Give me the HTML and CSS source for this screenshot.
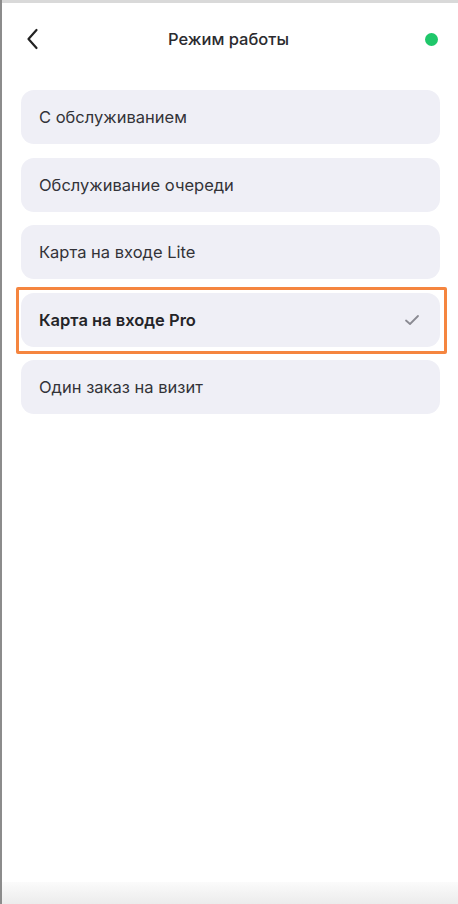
FILE: index.html
```html
<!DOCTYPE html>
<html lang="ru">
<head>
<meta charset="utf-8">
<link rel="stylesheet" href="styles.css">
</head>
<body>
<div class="screen">
  <div class="topbar"></div>
  <header class="header">
    <button class="back" aria-label="Назад">
      <svg width="14" height="22" viewBox="0 0 14 22"><path d="M11.5 2 L3.5 11 L11.5 20" fill="none" stroke="#222" stroke-width="2.2" stroke-linecap="round" stroke-linejoin="round"/></svg>
    </button>
    <h1 class="title">Режим работы</h1>
    <span class="status"></span>
  </header>
  <ul class="list">
    <li class="item">С обслуживанием</li>
    <li class="item">Обслуживание очереди</li>
    <li class="item">Карта на входе Lite</li>
    <li class="item selected">
      <span>Карта на входе Pro</span>
      <svg class="check" width="16" height="12" viewBox="0 0 16 12"><path d="M2 6.5 L6 10 L14 2" fill="none" stroke="#8a8a92" stroke-width="1.8" stroke-linecap="round" stroke-linejoin="round"/></svg>
      <span class="highlight"></span>
    </li>
    <li class="item">Один заказ на визит</li>
  </ul>
  <div class="bottom"></div>
</div>
</body>
</html>
```
FILE: styles.css
```css
* { box-sizing: border-box; }
html, body { margin: 0; padding: 0; background: #fff; }
body { font-family: Inter, Roboto, "Noto Sans", sans-serif; color: #2b2b2f; }
.screen {
  width: 458px;
  height: 904px;
  position: relative;
  display: flex;
  flex-direction: column;
  border-left: 2px solid #8c8c8c;
  overflow: hidden;
}
.topbar { height: 3px; background: #d9d9d9; flex: none; }
.header {
  height: 72px;
  display: grid;
  grid-template-columns: 1fr auto 1fr;
  align-items: center;
  padding: 0 20px 0 23px;
}
.back { background: none; border: 0; padding: 0; width: 20px; height: 24px; display: flex; align-items: center; justify-self: start; }
.title { margin: 0 6px 0 0; font-size: 16.5px; font-weight: 500; color: #2b2b2f; }
.status { width: 13px; height: 13px; border-radius: 50%; background: #1fc76a; justify-self: end; }
.list {
  list-style: none;
  margin: 0;
  padding: 15px 18px 0 19px;
  display: flex;
  flex-direction: column;
  gap: 13.5px;
}
.item {
  position: relative;
  height: 54px;
  border-radius: 13px;
  background: #efeff6;
  display: flex;
  align-items: center;
  justify-content: space-between;
  padding: 0 20px 0 18px;
  font-size: 16.5px;
  color: #333338;
}
.item.selected { font-weight: 600; color: #242428; }
.highlight {
  position: absolute;
  left: -5px;
  right: -7px;
  top: -6px;
  bottom: -7px;
  border: 3px solid #f5853f;
  border-radius: 2px;
  pointer-events: none;
}
.bottom {
  margin-top: auto;
  height: 22px;
  background: linear-gradient(#fbfbfb, #ececec);
}
```
